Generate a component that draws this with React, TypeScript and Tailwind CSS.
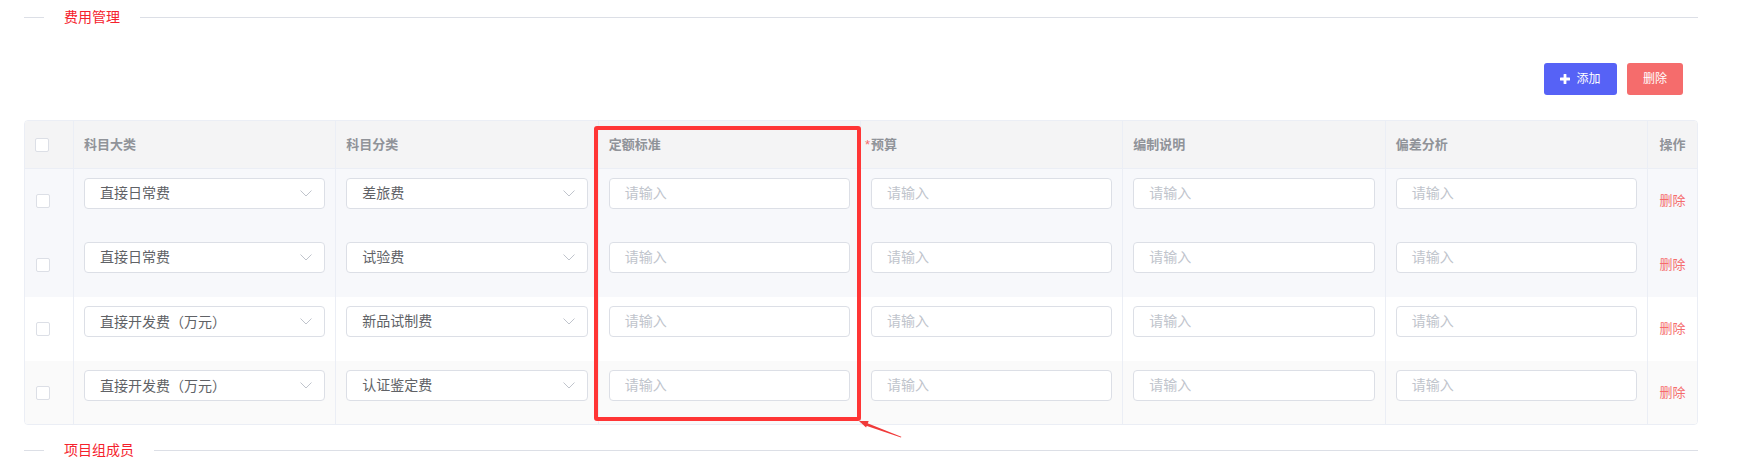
import React from 'react';

const rows = [
  { major: '直接日常费', minor: '差旅费', bg: 'bg-[#f7f8fb]', h: 'h-[64px]' },
  { major: '直接日常费', minor: '试验费', bg: 'bg-[#f7f8fb]', h: 'h-[64px]' },
  { major: '直接开发费（万元）', minor: '新品试制费', bg: 'bg-white', h: 'h-[64px]' },
  { major: '直接开发费（万元）', minor: '认证鉴定费', bg: 'bg-[#fafafa]', h: 'h-[63px]' },
];

const headers = ['科目大类', '科目分类', '定额标准', '预算', '编制说明', '偏差分析'];

// full-width brackets are drawn centred in the TC face, as in the screenshot
const Label = ({ text }: { text: string }) => (
  <>
    {text.split(/([（）])/).map((part, i) =>
      part === '（' || part === '）' ? (
        <span key={i} className="font-['Noto_Sans_CJK_TC',sans-serif]">
          {part}
        </span>
      ) : (
        <React.Fragment key={i}>{part}</React.Fragment>
      )
    )}
  </>
);

const SectionTitle = ({ title, className = '' }: { title: string; className?: string }) => (
  <div className={`flex items-center h-[34px] ${className}`}>
    <div className="w-[20px] h-px bg-[#dcdfe6]" />
    <span className="mx-[20px] text-[14px] leading-none text-[#f5222d]">{title}</span>
    <div className="flex-1 h-px bg-[#dcdfe6]" />
  </div>
);

const Checkbox = () => (
  <span className="block w-[14px] h-[14px] bg-white border border-[#dcdfe6] rounded-[2px]" />
);

const Chevron = () => (
  <svg width="12" height="7" viewBox="0 0 12 7" className="shrink-0">
    <polyline points="0.5,0.5 6,6 11.5,0.5" fill="none" stroke="#c0c4cc" strokeWidth="1" />
  </svg>
);

const SelectBox = ({ value }: { value: string }) => (
  <div className="h-[31px] bg-white border border-[#dcdfe6] rounded-[4px] flex items-center justify-between pl-[15px] pr-[12px]">
    <span className="text-[14px] text-[#606266] whitespace-nowrap">
      <Label text={value} />
    </span>
    <Chevron />
  </div>
);

const InputBox = () => (
  <div className="h-[31px] bg-white border border-[#dcdfe6] rounded-[4px] flex items-center px-[15px]">
    <span className="text-[14px] text-[#c0c4cc]">请输入</span>
  </div>
);

export default function App() {
  return (
    <div className="relative w-[1748px] h-[462px] bg-white overflow-hidden font-['Liberation_Sans','Noto_Sans_CJK_SC',sans-serif]">
      <div className="ml-[24px] w-[1674px]">
        <SectionTitle title="费用管理" />

        {/* toolbar */}
        <div className="flex justify-end gap-[10px] pr-[15px] pt-[29px]">
          <button className="h-[32px] w-[73px] rounded-[3px] bg-[#5662f6] text-white text-[12px] flex items-center justify-center gap-[6px]">
            <svg width="10" height="10" viewBox="0 0 10 10">
              <rect x="3.6" y="0" width="2.8" height="10" fill="#fff" rx="0.5" />
              <rect x="0" y="3.6" width="10" height="2.8" fill="#fff" rx="0.5" />
            </svg>
            添加
          </button>
          <button className="h-[32px] w-[56px] rounded-[3px] bg-[#f56c6c] text-white text-[12px] flex items-center justify-center">
            删除
          </button>
        </div>

        {/* table */}
        <div className="relative mt-[25px] border border-[#ebeef5] rounded-[4px] overflow-hidden">
          <div className="grid grid-cols-[49px_repeat(6,minmax(0,1fr))_49px]">
            <div className="h-[48px] bg-[#f4f4f5] border-r border-b border-[#ebeef5] flex items-center pl-[10px]">
              <Checkbox />
            </div>
            {headers.map((h) => (
              <div
                key={h}
                className="h-[48px] bg-[#f4f4f5] border-r border-b border-[#ebeef5] flex items-center px-[10px] text-[13px] font-bold text-[#909399]"
              >
                {h === '预算' ? (
                  <>
                    <span className="text-[#f56c6c] font-normal -ml-[6px] mr-px">*</span>
                    {h}
                  </>
                ) : (
                  h
                )}
              </div>
            ))}
            <div className="h-[48px] bg-[#f4f4f5] border-b border-[#ebeef5] flex items-center justify-center text-[13px] font-bold text-[#909399]">
              操作
            </div>

            {rows.map((r, i) => (
              <React.Fragment key={i}>
                <div className={`${r.h} ${r.bg} border-r border-[#ebeef5] flex items-center pl-[11px]`}>
                  <Checkbox />
                </div>
                <div className={`${r.h} ${r.bg} border-r border-[#ebeef5] px-[10px] pt-[9px]`}>
                  <SelectBox value={r.major} />
                </div>
                <div className={`${r.h} ${r.bg} border-r border-[#ebeef5] px-[10px] pt-[9px]`}>
                  <SelectBox value={r.minor} />
                </div>
                {[0, 1, 2, 3].map((c) => (
                  <div key={c} className={`${r.h} ${r.bg} border-r border-[#ebeef5] px-[10px] pt-[9px]`}>
                    <InputBox />
                  </div>
                ))}
                <div className={`${r.h} ${r.bg} flex items-center justify-center text-[13px] text-[#f56c6c]`}>
                  删除
                </div>
              </React.Fragment>
            ))}
          </div>

          {/* highlight annotation */}
          <div className="absolute left-[569px] top-[5px] w-[267px] h-[295px] border-[4px] border-[#ff3535] rounded-[3px] pointer-events-none" />
        </div>

        <SectionTitle title="项目组成员" className="mt-[8px]" />
      </div>

      {/* arrow annotation */}
      <svg className="absolute left-[855px] top-[415px]" width="50" height="28" viewBox="0 0 50 28">
        <polygon points="4,6 13.7,6.05 11.1,12.55" fill="#f03a3a" />
        <polygon points="10,7.2 9,10 46,22.4 46.3,21.8" fill="#f03a3a" />
      </svg>
    </div>
  );
}
